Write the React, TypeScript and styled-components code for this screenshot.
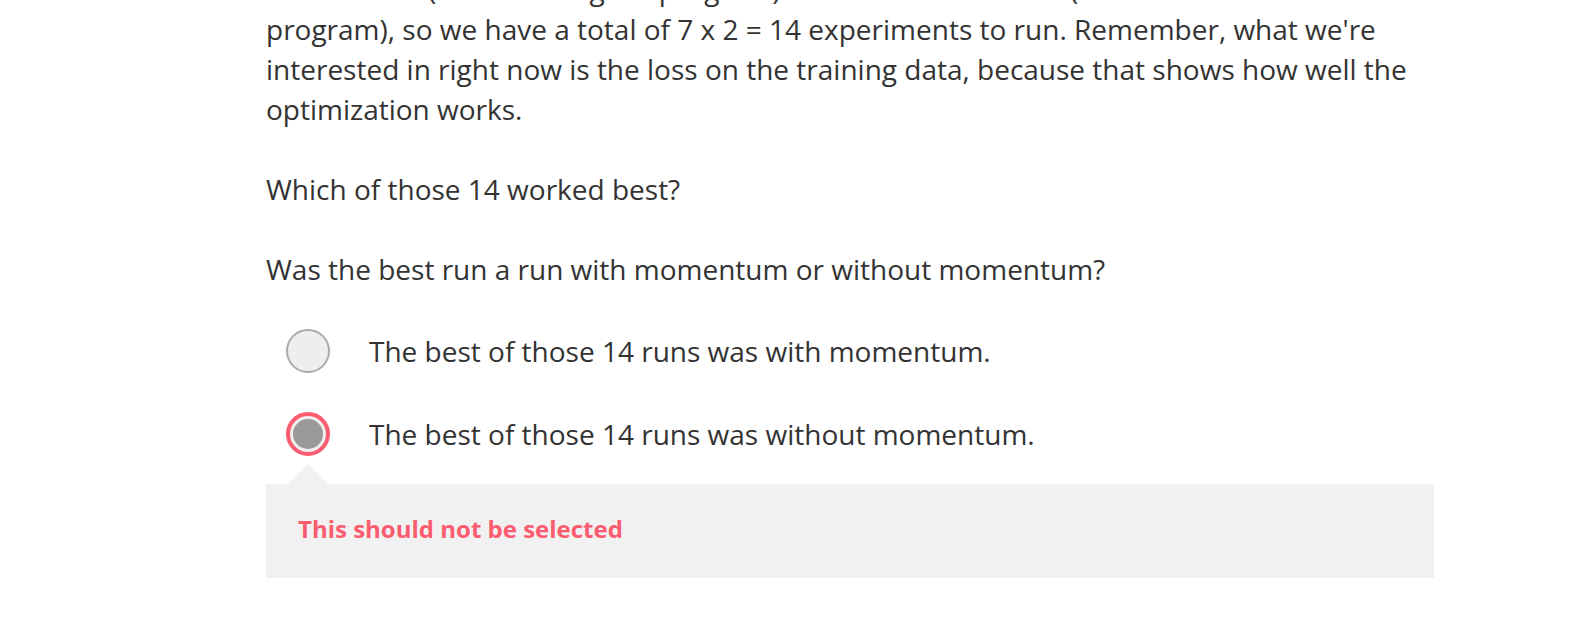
import React from "react";
import styled, { createGlobalStyle } from "styled-components";

const Global = createGlobalStyle`
  html, body { margin: 0; padding: 0; background: #fff; overflow: hidden; }
  body { font-family: "Open Sans", "Noto Sans", sans-serif; color: #333; }
`;

const Page = styled.div`
  width: 1582px;
  height: 634px;
  overflow: hidden;
`;

const Column = styled.div`
  width: 1168px;
  margin-left: 266px;
  margin-top: -31px;
  display: flex;
  flex-direction: column;
`;

const Para = styled.p`
  margin: 0 0 40px;
  font-size: 28px;
  line-height: 40px;
  color: #333;
`;

const Options = styled.div`
  display: flex;
  flex-direction: column;
  gap: 39px;
  padding-left: 20px;
`;

const Option = styled.label`
  display: flex;
  align-items: center;
  gap: 39px;
  font-size: 28px;
  line-height: 44px;
  color: #333;
`;

const Radio = styled.span<{ $wrong?: boolean }>`
  box-sizing: border-box;
  width: 44px;
  height: 44px;
  border-radius: 50%;
  flex: none;
  background: #eee;
  border: ${(p) => (p.$wrong ? "4px solid #fc5c6f" : "2px solid #aaa")};
  display: flex;
  align-items: center;
  justify-content: center;
`;

const Dot = styled.span`
  width: 30px;
  height: 30px;
  border-radius: 50%;
  background: #999;
`;

const Feedback = styled.div`
  box-sizing: border-box;
  position: relative;
  margin-top: 28px;
  background: #f1f1f1;
  height: 94px;
  display: flex;
  align-items: center;
  padding: 0 0 4px 32px;
  &::before {
    content: "";
    position: absolute;
    left: 22px;
    top: -20px;
    border-left: 20px solid transparent;
    border-right: 20px solid transparent;
    border-bottom: 20px solid #f1f1f1;
  }
`;

const FeedbackText = styled.span`
  font-size: 24px;
  line-height: 32px;
  font-weight: 700;
  color: #fc5c6f;
`;

export default function App() {
  return (
    <Page>
      <Global />
      <Column>
        <Para>
          momentum (as in the original program) and with momentum (use momentum = 0.9
          <br />
          program), so we have a total of 7 x 2 = 14 experiments to run. Remember, what we're
          interested in right now is the loss on the training data, because that shows how well the
          optimization works.
        </Para>
        <Para>Which of those 14 worked best?</Para>
        <Para>Was the best run a run with momentum or without momentum?</Para>
        <Options>
          <Option>
            <Radio />
            The best of those 14 runs was with momentum.
          </Option>
          <Option>
            <Radio $wrong>
              <Dot />
            </Radio>
            The best of those 14 runs was without momentum.
          </Option>
        </Options>
        <Feedback>
          <FeedbackText>This should not be selected</FeedbackText>
        </Feedback>
      </Column>
    </Page>
  );
}
